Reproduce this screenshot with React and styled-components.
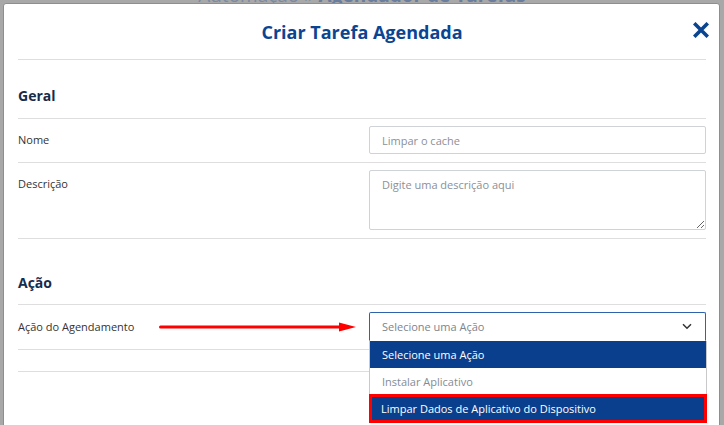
import * as React from 'react';
import styled, { createGlobalStyle } from 'styled-components';

const GlobalStyle = createGlobalStyle`
  html, body {
    margin: 0;
    padding: 0;
    background: #a8a8a8;
    font-family: "Open Sans", "Noto Sans", sans-serif;
    font-stretch: 95%;
  }
  * { box-sizing: border-box; }
`;

const Page = styled.div`
  height: 425px;
  overflow: hidden;
  position: relative;
`;

const PageTitle = styled.div`
  margin-top: -17px;
  text-align: center;
  font-size: 19px;
  line-height: 24px;
  font-stretch: 100%;
  color: #7b8aa2;
  white-space: nowrap;

  b { font-weight: 700; color: #6a7d9c; }
`;

const Modal = styled.div`
  position: absolute;
  top: 3px;
  left: 3px;
  right: 4px;
  bottom: -4px;
  background: #fff;
  border: 1px solid #8e8e8e;
  border-radius: 3px;
  padding: 0 13px 0 14px;
`;

const Header = styled.div`
  position: relative;
  height: 56px;
  display: flex;
  align-items: center;
  justify-content: center;
  border-bottom: 1px solid #dedede;

  h2 {
    margin: 0;
    font-size: 18px;
    font-weight: 700;
    color: #0b4592;
  }
`;

const CloseButton = styled.button`
  position: absolute;
  right: -3px;
  top: 18px;
  width: 16px;
  height: 16px;
  padding: 0;
  border: 0;
  background: none;
  cursor: pointer;
  display: flex;
`;

const SectionTitle = styled.div`
  padding: ${p => (p.$spaced ? '34px 0 11px' : '26px 0 12px')};
  line-height: 20px;
  font-size: 14px;
  font-weight: 700;
  color: #172b4d;
  border-bottom: 1px solid #dedede;
`;

const Row = styled.div`
  display: grid;
  grid-template-columns: 351px 1fr;
  padding: 7px 0 8px;
  border-bottom: 1px solid #dedede;
`;

const LabelCell = styled.div`
  display: flex;
  align-items: ${p => (p.$top ? 'flex-start' : 'center')};
  line-height: 28px;
  font-size: 11px;
  color: #333;
`;

const Pointer = styled.svg`
  margin-left: auto;
  margin-right: 13px;
  flex: none;
`;

const TextInput = styled.input`
  display: block;
  width: 100%;
  height: 28px;
  padding: 0 12px;
  border: 1px solid #cfd2d6;
  border-radius: 2px;
  font: inherit;
  font-size: 11px;
  color: #333;
  outline: none;

  &::placeholder { color: #8a9099; }
`;

const TextArea = styled.textarea`
  display: block;
  width: 100%;
  height: 60px;
  padding: 6px 12px;
  border: 1px solid #cfd2d6;
  border-radius: 2px;
  font: inherit;
  font-size: 11px;
  line-height: 16px;
  color: #333;
  resize: vertical;
  outline: none;

  &::placeholder { color: #8a9099; }
`;

const SelectWrap = styled.div`
  position: relative;
`;

const SelectBox = styled.div`
  height: 29px;
  display: flex;
  align-items: center;
  justify-content: space-between;
  padding: 0 13px 0 12px;
  border: 1px solid #2f64ad;
  border-bottom-color: transparent;
  border-radius: 2px 2px 0 0;
  font-size: 11px;
  color: #7d848e;
`;

const OptionList = styled.ul`
  position: absolute;
  top: 100%;
  left: 0;
  right: -1px;
  margin: 0;
  padding: 0;
  list-style: none;
  background: #fff;
  border-left: 1px solid #c9c9c9;
  border-right: 1px solid #c9c9c9;
  z-index: 2;
`;

const Option = styled.li`
  height: ${p => (p.$marked ? '29px' : p.$first ? '27px' : '26px')};
  display: flex;
  align-items: center;
  padding: 0 ${p => (p.$marked ? '9px' : '12px')};
  font-size: 11px;
  background: ${p => (p.$active ? '#0a3f8e' : '#fff')};
  color: ${p => (p.$active ? '#fff' : '#858b94')};
  border: ${p => (p.$marked ? '3px solid #ff0000' : '0')};
  margin: ${p => (p.$marked ? '0 -1px' : '0')};
`;

const Spacer = styled.div`
  height: 22px;
  border-bottom: 1px solid #dedede;
`;

function CloseIcon() {
  return (
    <svg width="16" height="16" viewBox="0 0 16 16">
      <path d="M2.5 2.5 L13.5 13.5 M13.5 2.5 L2.5 13.5" stroke="#0b4592" strokeWidth="3.6" strokeLinecap="square" fill="none" />
    </svg>
  );
}

function Chevron() {
  return (
    <svg width="10" height="7" viewBox="0 0 10 7">
      <path d="M1 1.2 L5 5.2 L9 1.2" stroke="#333" strokeWidth="1.5" fill="none" />
    </svg>
  );
}

const options = [
  'Selecione uma Ação',
  'Instalar Aplicativo',
  'Limpar Dados de Aplicativo do Dispositivo',
];

export default function App() {
  return (
    <Page>
      <GlobalStyle />
      <PageTitle>Automação » <b>Agendador de Tarefas</b></PageTitle>

      <Modal>
        <Header>
          <h2>Criar Tarefa Agendada</h2>
          <CloseButton aria-label="Fechar"><CloseIcon /></CloseButton>
        </Header>

        <SectionTitle>Geral</SectionTitle>
        <Row>
          <LabelCell>Nome</LabelCell>
          <TextInput placeholder="Limpar o cache" />
        </Row>
        <Row>
          <LabelCell $top>Descrição</LabelCell>
          <TextArea placeholder="Digite uma descrição aqui" />
        </Row>

        <SectionTitle $spaced>Ação</SectionTitle>
        <Row>
          <LabelCell>
            <span>Ação do Agendamento</span>
            <Pointer width="197" height="10" viewBox="0 0 197 10">
              <line x1="1.5" y1="5" x2="184" y2="5" stroke="#ff0000" strokeWidth="3" strokeLinecap="round" />
              <polygon points="180,0.5 197,5 180,9.5" fill="#ff0000" />
            </Pointer>
          </LabelCell>
          <SelectWrap>
            <SelectBox>
              <span>Selecione uma Ação</span>
              <Chevron />
            </SelectBox>
            <OptionList>
              {options.map((label, i) => (
                <Option key={label} $first={i === 0} $active={i !== 1} $marked={i === 2}>
                  {label}
                </Option>
              ))}
            </OptionList>
          </SelectWrap>
        </Row>
        <Spacer />
      </Modal>
    </Page>
  );
}
